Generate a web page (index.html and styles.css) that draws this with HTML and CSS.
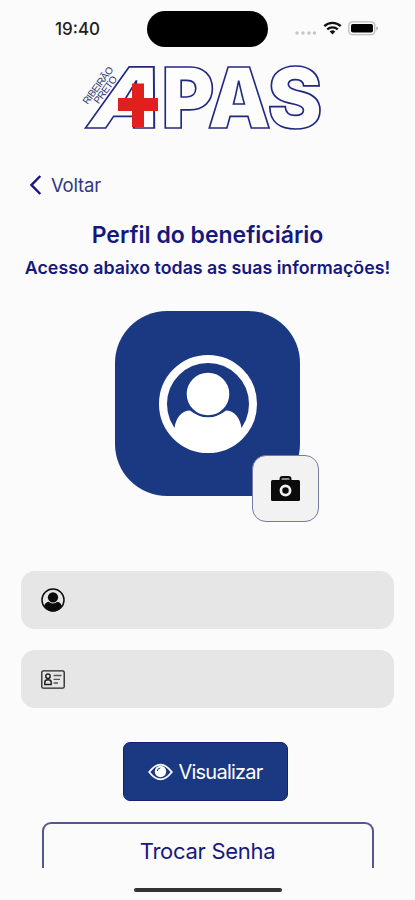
FILE: index.html
```html
<!DOCTYPE html>
<html lang="pt-BR">
<head>
<meta charset="utf-8">
<title>Perfil do beneficiário</title>
<link rel="stylesheet" href="styles.css">
</head>
<body>
<div class="screen">
  <header class="status">
    <span class="time">19:40</span>
    <span class="island"></span>
    <svg class="indicators" width="90" height="20" viewBox="0 0 90 20">
      <g fill="#c4c4c4"><circle cx="3" cy="14" r="1.7"/><circle cx="9" cy="14" r="1.7"/><circle cx="15" cy="14" r="1.7"/><circle cx="20.500" cy="14" r="1.700"/></g>
      <g fill="none" stroke="#111" stroke-width="2.300"><path d="M30.300 7.200a12 12 0 0 1 16.400 0"/><path d="M33.200 10.400a8 8 0 0 1 10.600 0"/></g>
      <path d="M35.700 12.500a4.200 4.200 0 0 1 5.600 0l-2.800 3z" fill="#111"/>
      <rect x="54.800" y="2.800" width="26" height="12.800" rx="3.500" fill="#fafafa" stroke="#bbb" stroke-width="1.300"/>
      <rect x="57" y="5" width="22" height="8.600" rx="1.800" fill="#000"/>
      <path d="M82.300 7.200c2.200.8 2.200 3.400 0 4.200z" fill="#aaa"/>
    </svg>
  </header>

  <svg class="logo" width="250" height="78" viewBox="78 58 250 78" role="img" aria-label="APAS Ribeirão Preto">
    <g class="logo-letters">
      <text transform="matrix(1.090 0 -.36 1 83.500 127.500)">A</text>
      <text transform="matrix(.96 0 0 1 161.500 127.500)">P</text>
      <text transform="matrix(.95 0 0 1 207.500 127.500)">A</text>
      <text transform="matrix(.98 0 0 1 267.500 127.500)">S</text>
    </g>
    <path d="M132 83.500h12V98h14v13h-14v16h-12v-16h-14V98h14z" fill="#df201c"/>
    <g class="logo-city">
      <text transform="translate(87.500 105) rotate(-53)" textLength="44">RIBEIRÃO</text>
      <text transform="translate(98.500 104.500) rotate(-53)" textLength="32">PRETO</text>
    </g>
  </svg>

  <a class="back">
    <svg width="13" height="20" viewBox="0 0 13 20"><path d="M11.300 1 2.500 10l8.800 9" fill="none" stroke="#17187c" stroke-width="2.500"/></svg>
    <span>Voltar</span>
  </a>

  <h1>Perfil do beneficiário</h1>
  <p class="subtitle">Acesso abaixo todas as suas informações!</p>

  <div class="avatar">
    <svg width="98" height="98" viewBox="0 0 98 98">
      <circle cx="49" cy="49" r="45" fill="none" stroke="#fff" stroke-width="8"/>
      <path d="M15.500 73C17 62 23 55.500 31 55.500q8 6.500 18 6.500t18-6.500c8 0 14 6.500 15.500 17.500A44 44 0 0 1 49 96 44 44 0 0 1 15.500 73z" fill="#fff"/>
      <circle cx="49" cy="39" r="22.300" fill="#fff" stroke="#1b3983" stroke-width="2"/>
    </svg>
    <button class="camera">
      <svg width="31" height="27" viewBox="0 0 31 27">
        <path d="M10.500 5.500V4q0-2 2-2h6q2 0 2 2v1.500" fill="#888" stroke="#0b0b0b" stroke-width="2"/>
        <rect x="1" y="5" width="29" height="21" rx="1.500" fill="#0b0b0b"/>
        <circle cx="15.500" cy="15.500" r="4.600" fill="#0b0b0b" stroke="#f1f1f1" stroke-width="2.700"/>
      </svg>
    </button>
  </div>

  <div class="field">
    <svg width="24" height="24" viewBox="0 0 98 98">
      <circle cx="49" cy="49" r="45" fill="none" stroke="#0b0b0b" stroke-width="6"/>
      <path d="M13 73C16 62 22 57 31 56q8 7 18 7t18-7c9 1 15 6 18 17A44 44 0 0 1 49 96 44 44 0 0 1 13 73z" fill="#0b0b0b"/>
      <circle cx="49" cy="38" r="21" fill="#0b0b0b"/>
    </svg>
  </div>
  <div class="field">
    <svg width="24" height="19" viewBox="0 0 24 19" fill="none" stroke="#222">
      <rect x=".8" y=".8" width="22.400" height="17.400" rx="1.500" stroke-width="1.300"/>
      <circle cx="7" cy="6.300" r="2.200" stroke-width="1.500"/>
      <path d="M3.800 14.500v-2.300q0-2.500 3.200-2.500t3.200 2.500v2.300z" stroke-width="1.500"/>
      <path d="M12.500 5.500h8M12.500 9.300h6.500M12.500 13h4.500" stroke-width="1.300" stroke="#555"/>
    </svg>
  </div>

  <button class="primary">
    <svg width="25" height="18" viewBox="0 0 25 18">
      <path d="M1.200 9Q12.500-5.800 23.800 9 12.500 23.800 1.200 9z" fill="none" stroke="#fff" stroke-width="1.800"/>
      <circle cx="12.500" cy="8.500" r="5.700" fill="#fff"/>
      <path d="M9.300 8q.2-2.700 3-3" fill="none" stroke="#1b3983" stroke-width="1"/>
    </svg>
    <span>Visualizar</span>
  </button>

  <div class="secondary"><span>Trocar Senha</span></div>
  <div class="home"></div>
</div>
</body>
</html>
```
FILE: styles.css
```css
* { box-sizing: border-box; }
body { margin: 0; background: #fbfbfb; font-family: Inter, "Liberation Sans", sans-serif; color: #17187c; }
.screen { width: 415px; height: 900px; overflow: hidden; display: flex; flex-direction: column; align-items: center; }
button { font: inherit; padding: 0; }
svg { display: block; flex: none; }

.status { width: 100%; height: 58px; flex: none; display: grid; grid-template-columns: 147px 121px 1fr; align-items: center; }
.time { padding-left: 55px; font-size: 17px; font-weight: 500; color: #222; }
.island { height: 36px; border-radius: 18px; background: #000; }
.indicators { margin-left: 26px; }

.logo { align-self: flex-start; margin-left: 78px; overflow: visible; }
.logo-letters { font: 900 84px Inter, sans-serif; fill: #fdfdfd; stroke: #20287f; stroke-width: 1.700; }
.logo-city { font: 400 10px "Liberation Sans", sans-serif; fill: #30366f; }

.back { align-self: flex-start; height: 24px; margin: 37px 0 0 29px; display: flex; align-items: center; gap: 9px; font-size: 18.500px; letter-spacing: -.2px; color: #30367f; }
h1 { margin: 24px 0 0; height: 28px; line-height: 28px; font-size: 23px; font-weight: 600; white-space: nowrap; }
.subtitle { margin: 8px 0 0; height: 22px; line-height: 22px; font-size: 17.800px; font-weight: 600; white-space: nowrap; }

.avatar { position: relative; width: 185px; height: 185px; margin-top: 32px; flex: none; border-radius: 52px; background: #1b3983; display: grid; place-items: center; }
.camera { position: absolute; left: 137px; top: 144px; width: 67px; height: 67px; border: 1px solid #77799f; border-radius: 14px; background: #f2f2f2; display: grid; place-items: center; }
.avatar + .field { margin-top: 75px; }
.field { width: 373px; height: 58px; margin-top: 21px; padding-left: 20px; flex: none; border-radius: 14px; background: #e6e6e6; display: flex; align-items: center; }

.primary { width: 165px; height: 59px; margin-top: 34px; margin-right: 4px; flex: none; border: 1px solid #15216f; border-radius: 7px; background: #1b3983; color: #fff; font-size: 20px; letter-spacing: -.75px; display: flex; align-items: center; justify-content: center; gap: 5px; }
.secondary { width: 332px; height: 46px; margin-top: 21px; flex: none; border: 2px solid #55588f; border-bottom: 0; border-radius: 9px 9px 0 0; font-size: 22px; letter-spacing: -.3px; display: flex; justify-content: center; padding-top: 13px; line-height: 28px; }
.home { width: 148px; height: 4px; margin-top: 20px; flex: none; border-radius: 2px; background: #333; }
```
